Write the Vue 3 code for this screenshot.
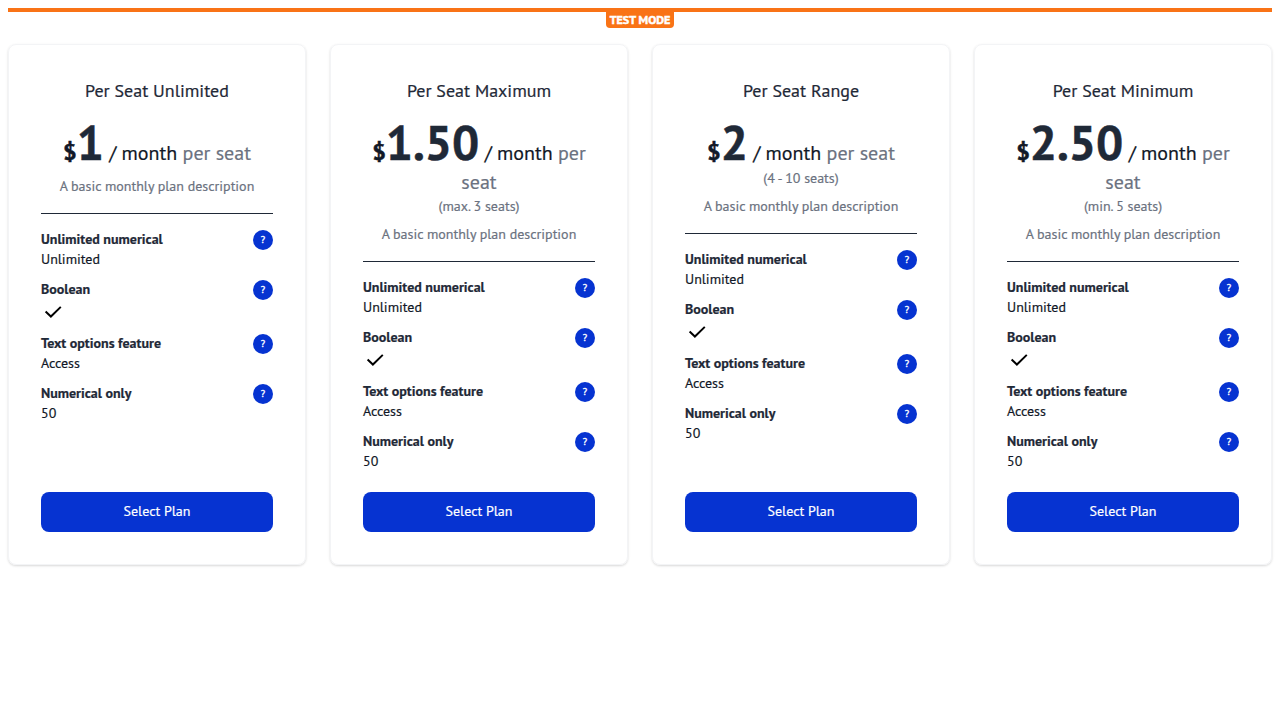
<script setup>
const features = [
  { name: 'Unlimited numerical', value: 'Unlimited' },
  { name: 'Boolean', check: true },
  { name: 'Text options feature', value: 'Access' },
  { name: 'Numerical only', value: '50' },
]
const plans = [
  { name: 'Per Seat Unlimited', price: '1' },
  { name: 'Per Seat Maximum', price: '1.50', seats: '(max. 3 seats)', wrap: true },
  { name: 'Per Seat Range', price: '2', seats: '(4 - 10 seats)' },
  { name: 'Per Seat Minimum', price: '2.50', seats: '(min. 5 seats)', wrap: true },
]
</script>

<template>
  <main class="page">
    <div class="bar"><span class="badge">TEST MODE</span></div>
    <section class="plans">
      <article v-for="p in plans" :key="p.name" class="card">
        <h2 class="name">{{ p.name }}</h2>
        <div class="price">
          <span class="currency">$</span><span class="amount">{{ p.price }}</span>{{ ' ' }}<span class="period">/ month</span>{{ ' ' }}<span class="unit">{{ p.wrap ? 'per' : 'per seat' }}</span>
        </div>
        <div v-if="p.wrap" class="unit wrapped">seat</div>
        <div v-if="p.seats" class="seats">{{ p.seats }}</div>
        <p class="desc">A basic monthly plan description</p>
        <ul class="features">
          <li v-for="f in features" :key="f.name">
            <div class="row"><span class="fname">{{ f.name }}</span><span class="help">?</span></div>
            <svg v-if="f.check" class="check" viewBox="0 0 24 24"><path d="M4.6 11.6 9.9 16.5 19.8 6.9" /></svg>
            <div v-else class="value">{{ f.value }}</div>
          </li>
        </ul>
        <button class="select">Select Plan</button>
      </article>
    </section>
  </main>
</template>

<style>
body { background: #fff; }
</style>

<style scoped>
.page { box-sizing: border-box; padding: 8px; font-family: "PT Sans", "Open Sans", "Noto Sans", sans-serif; color: #111827; font-size: 14px; line-height: 20px; -webkit-text-stroke: 0.2px currentColor; }
.bar { border-top: 4px solid #f97316; height: 32px; display: flex; justify-content: center; align-items: flex-start; }
.badge { width: 68px; height: 16px; border-radius: 0 0 4px 4px; background: #f97316; color: #fff; font-size: 12px; font-weight: 700; line-height: 16px; text-align: center; white-space: nowrap; -webkit-text-stroke-width: 0.5px; }
.plans { display: grid; grid-template-columns: repeat(4, 1fr); gap: 24px; }
.card { box-sizing: border-box; height: 521px; padding: 32px; border: 1px solid #f3f4f6; border-radius: 8px; box-shadow: 0 1px 3px rgba(0,0,0,.1), 0 1px 2px rgba(0,0,0,.06); display: flex; flex-direction: column; text-align: center; }
.name { margin: 0; height: 28px; line-height: 27px; font-size: 18px; font-weight: 400; color: #1f2937; }
.price { margin-top: 13px; height: 50px; line-height: 48px; white-space: nowrap; font-size: 20px; }
.currency { font-size: 24px; font-weight: 700; line-height: 24px; -webkit-text-stroke-width: 0.5px; }
.amount { font-size: 48px; font-weight: 700; color: #1f2937; -webkit-text-stroke: 0.5px #1f2937; }
.period, .price .unit { line-height: 28px; }
.unit { color: #6b7280; -webkit-text-stroke-color: #6b7280; }
.wrapped { font-size: 20px; line-height: 28px; }
.seats { color: #6b7280; line-height: 20px; }
.desc { margin: 8px 0 0; padding-bottom: 17px; border-bottom: 1px solid #1f2937; color: #6b7280; }
.features { list-style: none; padding: 0; margin: 16px 0 0; text-align: left; display: flex; flex-direction: column; gap: 10px; }
.row { display: flex; justify-content: space-between; height: 20px; }
.fname { font-weight: 700; color: #1f2937; line-height: 18px; }
.value { height: 20px; line-height: 18px; }
.help { width: 20px; height: 20px; border-radius: 50%; background: #0633d1; color: #fff; text-align: center; font-size: 10px; -webkit-text-stroke-width: 0.4px; }
.check { display: block; width: 24px; height: 24px; fill: none; stroke: #000; stroke-width: 2; }
.select { margin-top: auto; height: 40px; padding: 0 0 2px; border: 0; border-radius: 8px; background: #0633d1; color: #fff; font: inherit; font-weight: 500; }
</style>
